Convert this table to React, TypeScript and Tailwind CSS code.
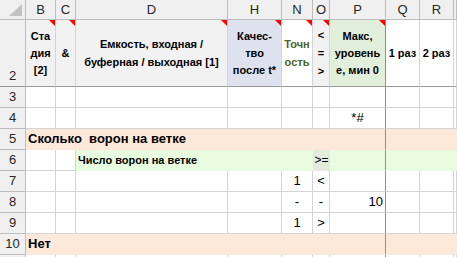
import React from "react";

const G = "border-[#d4d4d4]";

function Tri() {
  return (
    <svg className="absolute right-0 top-0" width="6" height="6" viewBox="0 0 6 6">
      <polygon points="0,0 6,0 6,6" fill="#ff0000" />
    </svg>
  );
}

function Cell({
  children,
  className = "",
  tri = false,
}: {
  children?: React.ReactNode;
  className?: string;
  tri?: boolean;
}) {
  return (
    <div className={`relative border-r border-b ${className}`}>
      {tri && <Tri />}
      {children}
    </div>
  );
}

export default function App() {
  const colLetters = ["B", "C", "D", "H", "N", "O", "P", "Q", "R", ""];
  const hdr = "bg-[#f0f0f0] border-[#bdbdbd] text-[#262626] flex items-center justify-center text-[13px]";
  const rowHdr = "bg-[#f0f0f0] border-[#bdbdbd] text-[#262626] flex items-center justify-center text-[13px]";
  const wc = `bg-white ${G}`;
  const pCol = "border-r-[#8f8f8f]";

  const normalRow = (n: number, label: string, vals: { N?: string; O?: string; P?: string; pAlign?: string }) => (
    <React.Fragment key={n}>
      <Cell className={rowHdr}>{label}</Cell>
      <Cell className={wc} />
      <Cell className={wc} />
      <Cell className={wc} />
      <Cell className={wc} />
      <Cell className={`${wc} flex items-center justify-center`}>{vals.N}</Cell>
      <Cell className={`${wc} flex items-center justify-center`}>{vals.O}</Cell>
      <Cell className={`${wc} ${pCol} flex items-center ${vals.pAlign ?? "justify-center"} px-[2px]`}>{vals.P}</Cell>
      <Cell className={wc} />
      <Cell className={wc} />
      <Cell className={wc} />
    </React.Fragment>
  );

  return (
    <div
      className="h-[257px] w-[457px] overflow-hidden bg-white text-black text-[13px]"
      style={{ fontFamily: '"Liberation Sans", Arial, sans-serif' }}
    >
      <div className="grid grid-cols-[26px_30px_20px_152px_54px_31px_17px_56px_34px_34px_1fr] grid-rows-[20px_67px_repeat(9,21px)]">
        {/* column header row */}
        <Cell className="bg-[#f0f0f0] border-[#bdbdbd]">
          <svg className="absolute left-[9px] top-[4px]" width="13" height="12" viewBox="0 0 13 12">
            <polygon points="13,0 13,12 0,12" fill="#c2c2c2" />
          </svg>
        </Cell>
        {colLetters.map((l, i) => (
          <Cell key={i} className={hdr}>
            {l}
          </Cell>
        ))}

        {/* row 2 */}
        <Cell className={`${rowHdr} !items-end border-b-[#9a9a9a]`}>
          <span className="pb-[1px]">2</span>
        </Cell>
        <Cell tri className="bg-[#f2f2f2] border-[#d4d4d4] border-b-[#9a9a9a] flex items-center justify-center text-center font-bold text-[11px] leading-[17px]">
          <span>Ста<br />дия<br />[2]</span>
        </Cell>
        <Cell tri className="bg-[#f2f2f2] border-[#d4d4d4] border-b-[#9a9a9a] flex items-center justify-center font-bold text-[11px]">
          &amp;
        </Cell>
        <Cell tri className="bg-[#f2f2f2] border-[#d4d4d4] border-b-[#9a9a9a] flex items-center justify-center text-center font-bold text-[11px] leading-[18px]">
          <span>Емкость, входная /<br />буферная / выходная [1]</span>
        </Cell>
        <Cell tri className="bg-[#dde2ee] border-[#d4d4d4] border-b-[#9a9a9a] flex items-center justify-center text-center font-bold text-[11px] leading-[17px]">
          <span>Качес-<br />тво<br />после t*</span>
        </Cell>
        <Cell tri className="bg-white border-[#d4d4d4] border-b-[#9a9a9a] flex items-center justify-center text-center font-bold text-[11px] leading-[18px] text-[#4f6228]">
          <span>Точн<br />ость</span>
        </Cell>
        <Cell tri className="bg-[#f2f2f2] border-[#d4d4d4] border-b-[#9a9a9a] flex items-center justify-center text-center font-bold text-[11px] leading-[18px]">
          <span>&lt;<br />=<br />&gt;</span>
        </Cell>
        <Cell tri className={`bg-[#e2efda] border-[#d4d4d4] border-b-[#9a9a9a] ${pCol} flex items-center justify-center text-center font-bold text-[11px] leading-[17px]`}>
          <span>Макс,<br />уровень<br />е, мин 0</span>
        </Cell>
        <Cell className="bg-white border-[#d4d4d4] border-b-[#9a9a9a] flex items-center justify-center font-bold text-[11px] whitespace-nowrap">
          1 раз
        </Cell>
        <Cell className="bg-white border-[#d4d4d4] border-b-[#9a9a9a] flex items-center justify-center font-bold text-[11px] whitespace-nowrap">
          2 раз
        </Cell>
        <Cell className="bg-white border-[#d4d4d4] border-b-[#9a9a9a]" />

        {/* row 3 */}
        {normalRow(3, "3", {})}
        {/* row 4 */}
        {normalRow(4, "4", { P: "*#" })}

        {/* row 5 */}
        <Cell className={rowHdr}>5</Cell>
        <div className="col-span-7 border-b border-r border-[#fde9d9] border-r-[#8f8f8f] bg-[#fde9d9] flex items-center pl-[2px] font-bold text-[13px] whitespace-pre">
          Сколько  ворон на ветке
        </div>
        <div className="col-span-3 border-b border-[#fde9d9] bg-[#fde9d9]" />

        {/* row 6 */}
        <Cell className={rowHdr}>6</Cell>
        <Cell className={wc} />
        <Cell className={wc} />
        <div className="col-span-3 border-b border-[#e8fde0] bg-[#e8fde0] flex items-center pl-[2px] font-bold text-[11px] whitespace-nowrap">
          Число ворон на ветке
        </div>
        <div className="border-b border-[#e2ebdc] bg-[#e2ebdc] flex items-center justify-center text-[12px]">
          &gt;=
        </div>
        <div className="border-b border-r border-[#e8fde0] border-r-[#8f8f8f] bg-[#e8fde0]" />
        <div className="col-span-3 border-b border-[#e8fde0] bg-[#e8fde0]" />

        {/* rows 7-9 */}
        {normalRow(7, "7", { N: "1", O: "<" })}
        {normalRow(8, "8", { N: "-", O: "-", P: "10", pAlign: "justify-end" })}
        {normalRow(9, "9", { N: "1", O: ">" })}

        {/* row 10 */}
        <Cell className={rowHdr}>10</Cell>
        <div className="col-span-7 border-b border-r border-[#fde9d9] border-r-[#8f8f8f] bg-[#fde9d9] flex items-center pl-[2px] font-bold text-[13px]">
          Нет
        </div>
        <div className="col-span-3 border-b border-[#fde9d9] bg-[#fde9d9]" />

        {/* row 11 (only its top edge is visible) */}
        {normalRow(11, "", {})}
      </div>
    </div>
  );
}
